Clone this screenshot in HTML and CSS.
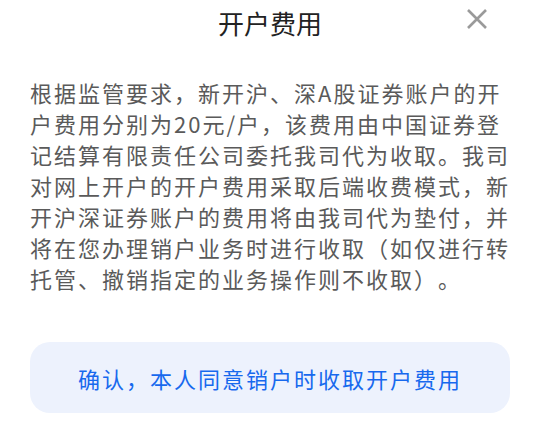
FILE: index.html
```html
<!DOCTYPE html>
<html lang="zh-CN">
<head>
    <meta charset="UTF-8">
    <meta name="viewport" content="width=device-width, initial-scale=1.0">
    <title>开户费用</title>
    <link rel="stylesheet" href="styles.css">
</head>
<body>
    <div class="sheet">
        <!-- 标题栏 -->
        <div class="sheet-header">
            <div class="sheet-title">开户费用</div>
            <button class="sheet-close" aria-label="关闭">
                <svg width="22" height="22" viewBox="0 0 22 22">
                    <path d="M2 2 L20 20 M20 2 L2 20" stroke="#9a9a9a" stroke-width="2.6" fill="none"/>
                </svg>
            </button>
        </div>

        <!-- 说明文字 -->
        <p class="sheet-text">根据监管要求，新开沪、深A股证券账户的开户费用分别为20元/户，该费用由中国证券登记结算有限责任公司委托我司代为收取。我司对网上开户的开户费用采取后端收费模式，新开沪深证券账户的费用将由我司代为垫付，并将在您办理销户业务时进行收取（如仅进行转托管、撤销指定的业务操作则不收取）。</p>

        <!-- 确认按钮 -->
        <button class="sheet-confirm">确认，本人同意销户时收取开户费用</button>
    </div>
</body>
</html>
```

FILE: styles.css
```css
body {
    margin: 0;
    background: #fff;
    font-family: "Noto Sans CJK SC", "Noto Sans", sans-serif;
    text-spacing-trim: space-all;
}

.sheet {
    width: 540px;
    display: flex;
    flex-direction: column;
}

.sheet-header {
    position: relative;
    height: 44px;
    display: flex;
    justify-content: center;
    align-items: center;
}

.sheet-title {
    font-size: 26px;
    color: #222;
}

.sheet-close {
    position: absolute;
    top: 8px;
    right: 52px;
    padding: 0;
    border: none;
    background: none;
    width: 22px;
    height: 22px;
}

.sheet-close svg {
    display: block;
}

.sheet-text {
    margin: 33px 0 0;
    padding: 0 24px 0 30px;
    font-size: 22px;
    line-height: 31px;
    letter-spacing: 2px;
    color: #5a5a5a;
}

.sheet-confirm {
    margin: 48px 30px 0;
    height: 71px;
    border: none;
    border-radius: 20px;
    background-color: #edf2fd;
    color: #1769ee;
    font-family: inherit;
    font-size: 22px;
    letter-spacing: 2px;
    text-spacing-trim: space-all;
}
```
